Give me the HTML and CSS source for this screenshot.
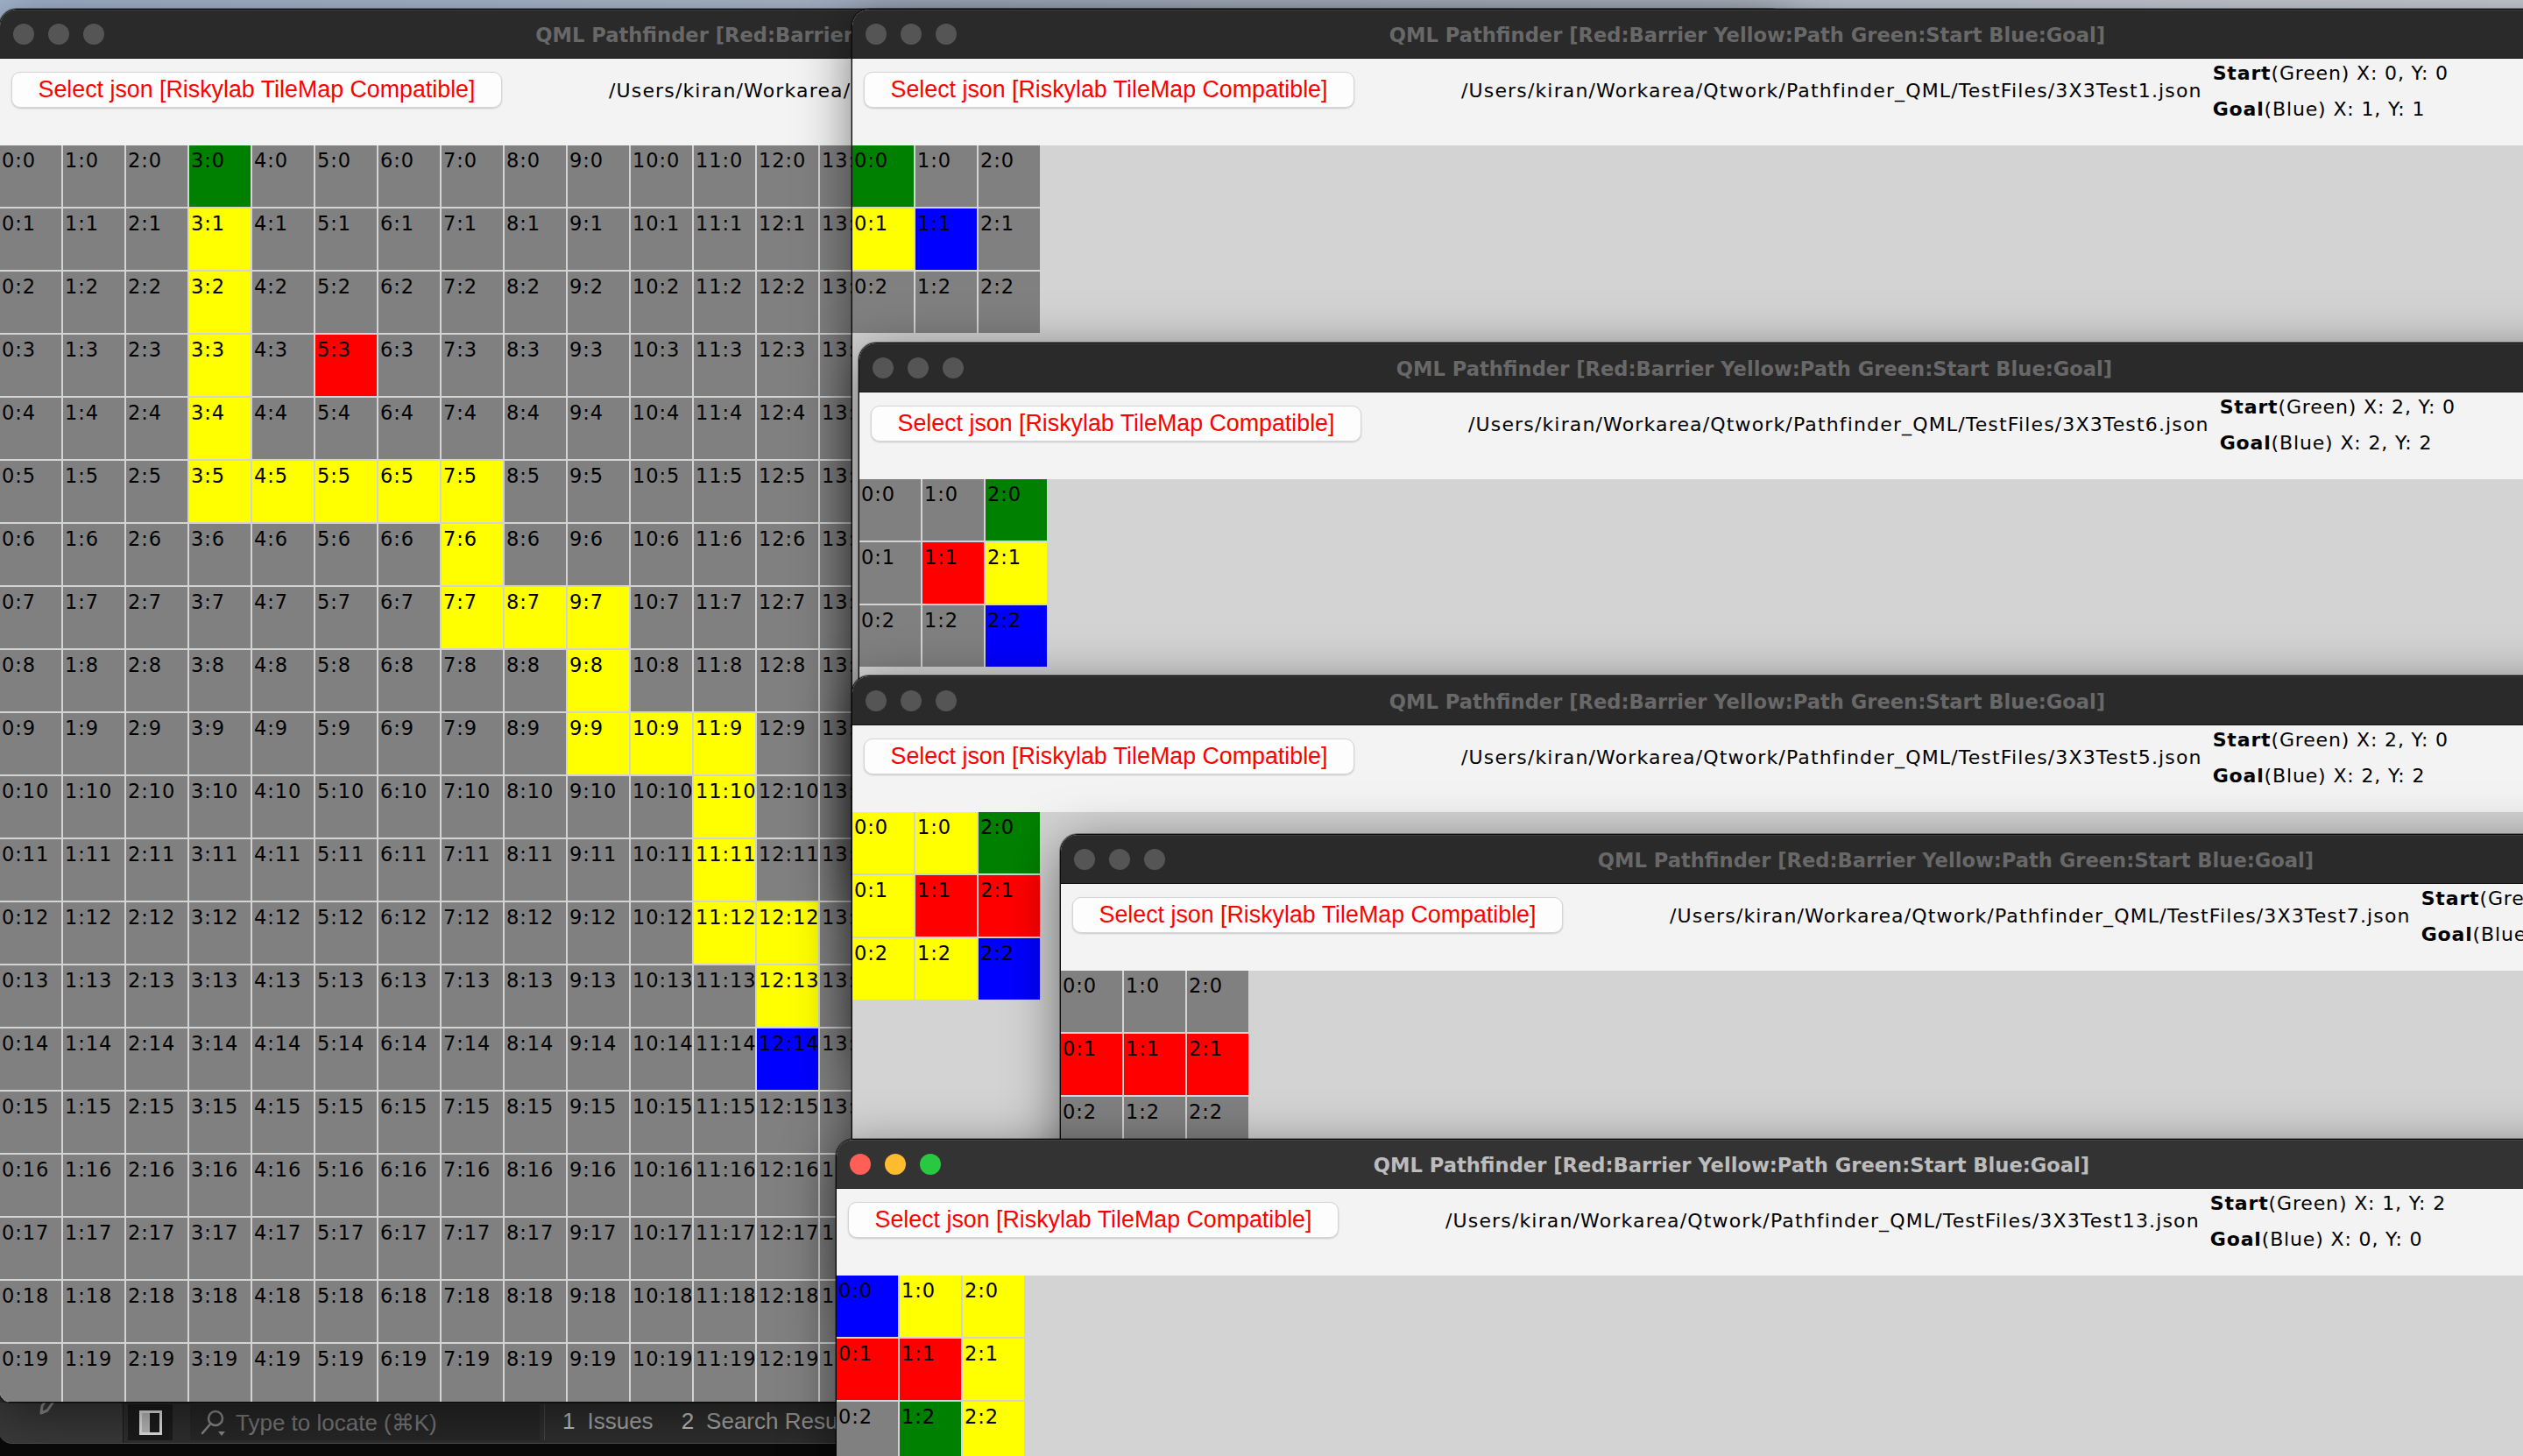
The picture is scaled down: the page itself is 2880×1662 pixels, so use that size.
FILE: index.html
```html
<!DOCTYPE html>
<html>
<head>
<meta charset="utf-8">
<title>QML Pathfinder</title>
<link rel="stylesheet" href="styles.css">
</head>
<body>
<div class="wallpaper"></div>

<div class="creator">
  <div class="statusbar">
    <div class="modecell">
      <svg class="pencil" width="30" height="40" viewBox="0 0 30 40"><path d="M22 2 L28 7 L10 33 L3 36 L4 28 Z" fill="none" stroke="#8d8d8d" stroke-width="3" stroke-linejoin="round"/></svg>
    </div>
    <div class="toggle">
      <svg width="26" height="28" viewBox="0 0 26 28"><rect x="1.5" y="1.5" width="23" height="25" fill="#1d1d1d" stroke="#e6e6e6" stroke-width="3"/><rect x="3" y="3" width="9" height="22" fill="#bdbdbd"/></svg>
    </div>
    <div class="search">
      <svg width="34" height="34" viewBox="0 0 34 34"><circle cx="19" cy="12" r="8" fill="none" stroke="#8a8a8a" stroke-width="2.5"/><path d="M13.5 18 L4 29" stroke="#8a8a8a" stroke-width="2.5" stroke-linecap="round"/><path d="M22 27 L30 27 L26 32 Z" fill="#8a8a8a"/></svg>
      <span>Type to locate (⌘K)</span>
    </div>
    <div class="sep"></div>
    <div class="pane"><span class="num">1</span>Issues</div>
    <div class="pane"><span class="num">2</span>Search Results</div>
  </div>
</div>

<!-- Window 1 : 20x20 map -->
<section class="win w1">
  <div class="titlebar">
    <div class="lights"><span class="light close"></span><span class="light min"></span><span class="light max"></span></div>
    <div class="title">QML Pathfinder [Red:Barrier Yellow:Path Green:Start Blue:Goal]</div>
    <div></div>
  </div>
  <div class="header">
    <button class="btn">Select json [Riskylab TileMap Compatible]</button>
    <div class="path">/Users/kiran/Workarea/Qtwork/Pathfinder_QML/TestFiles/20X20Test1.json</div>
    <div class="info"><div><b>Start</b>(Green) X: 3, Y: 0</div><div><b>Goal</b>(Blue) X: 12, Y: 14</div></div>
  </div>
  <div class="area">
    <div class="grid big">
      <div class="c">0:0</div><div class="c">1:0</div><div class="c">2:0</div><div class="c g">3:0</div><div class="c">4:0</div><div class="c">5:0</div><div class="c">6:0</div><div class="c">7:0</div><div class="c">8:0</div><div class="c">9:0</div><div class="c">10:0</div><div class="c">11:0</div><div class="c">12:0</div><div class="c">13:0</div>
      <div class="c">0:1</div><div class="c">1:1</div><div class="c">2:1</div><div class="c y">3:1</div><div class="c">4:1</div><div class="c">5:1</div><div class="c">6:1</div><div class="c">7:1</div><div class="c">8:1</div><div class="c">9:1</div><div class="c">10:1</div><div class="c">11:1</div><div class="c">12:1</div><div class="c">13:1</div>
      <div class="c">0:2</div><div class="c">1:2</div><div class="c">2:2</div><div class="c y">3:2</div><div class="c">4:2</div><div class="c">5:2</div><div class="c">6:2</div><div class="c">7:2</div><div class="c">8:2</div><div class="c">9:2</div><div class="c">10:2</div><div class="c">11:2</div><div class="c">12:2</div><div class="c">13:2</div>
      <div class="c">0:3</div><div class="c">1:3</div><div class="c">2:3</div><div class="c y">3:3</div><div class="c">4:3</div><div class="c r">5:3</div><div class="c">6:3</div><div class="c">7:3</div><div class="c">8:3</div><div class="c">9:3</div><div class="c">10:3</div><div class="c">11:3</div><div class="c">12:3</div><div class="c">13:3</div>
      <div class="c">0:4</div><div class="c">1:4</div><div class="c">2:4</div><div class="c y">3:4</div><div class="c">4:4</div><div class="c">5:4</div><div class="c">6:4</div><div class="c">7:4</div><div class="c">8:4</div><div class="c">9:4</div><div class="c">10:4</div><div class="c">11:4</div><div class="c">12:4</div><div class="c">13:4</div>
      <div class="c">0:5</div><div class="c">1:5</div><div class="c">2:5</div><div class="c y">3:5</div><div class="c y">4:5</div><div class="c y">5:5</div><div class="c y">6:5</div><div class="c y">7:5</div><div class="c">8:5</div><div class="c">9:5</div><div class="c">10:5</div><div class="c">11:5</div><div class="c">12:5</div><div class="c">13:5</div>
      <div class="c">0:6</div><div class="c">1:6</div><div class="c">2:6</div><div class="c">3:6</div><div class="c">4:6</div><div class="c">5:6</div><div class="c">6:6</div><div class="c y">7:6</div><div class="c">8:6</div><div class="c">9:6</div><div class="c">10:6</div><div class="c">11:6</div><div class="c">12:6</div><div class="c">13:6</div>
      <div class="c">0:7</div><div class="c">1:7</div><div class="c">2:7</div><div class="c">3:7</div><div class="c">4:7</div><div class="c">5:7</div><div class="c">6:7</div><div class="c y">7:7</div><div class="c y">8:7</div><div class="c y">9:7</div><div class="c">10:7</div><div class="c">11:7</div><div class="c">12:7</div><div class="c">13:7</div>
      <div class="c">0:8</div><div class="c">1:8</div><div class="c">2:8</div><div class="c">3:8</div><div class="c">4:8</div><div class="c">5:8</div><div class="c">6:8</div><div class="c">7:8</div><div class="c">8:8</div><div class="c y">9:8</div><div class="c">10:8</div><div class="c">11:8</div><div class="c">12:8</div><div class="c">13:8</div>
      <div class="c">0:9</div><div class="c">1:9</div><div class="c">2:9</div><div class="c">3:9</div><div class="c">4:9</div><div class="c">5:9</div><div class="c">6:9</div><div class="c">7:9</div><div class="c">8:9</div><div class="c y">9:9</div><div class="c y">10:9</div><div class="c y">11:9</div><div class="c">12:9</div><div class="c">13:9</div>
      <div class="c">0:10</div><div class="c">1:10</div><div class="c">2:10</div><div class="c">3:10</div><div class="c">4:10</div><div class="c">5:10</div><div class="c">6:10</div><div class="c">7:10</div><div class="c">8:10</div><div class="c">9:10</div><div class="c">10:10</div><div class="c y">11:10</div><div class="c">12:10</div><div class="c">13:10</div>
      <div class="c">0:11</div><div class="c">1:11</div><div class="c">2:11</div><div class="c">3:11</div><div class="c">4:11</div><div class="c">5:11</div><div class="c">6:11</div><div class="c">7:11</div><div class="c">8:11</div><div class="c">9:11</div><div class="c">10:11</div><div class="c y">11:11</div><div class="c">12:11</div><div class="c">13:11</div>
      <div class="c">0:12</div><div class="c">1:12</div><div class="c">2:12</div><div class="c">3:12</div><div class="c">4:12</div><div class="c">5:12</div><div class="c">6:12</div><div class="c">7:12</div><div class="c">8:12</div><div class="c">9:12</div><div class="c">10:12</div><div class="c y">11:12</div><div class="c y">12:12</div><div class="c">13:12</div>
      <div class="c">0:13</div><div class="c">1:13</div><div class="c">2:13</div><div class="c">3:13</div><div class="c">4:13</div><div class="c">5:13</div><div class="c">6:13</div><div class="c">7:13</div><div class="c">8:13</div><div class="c">9:13</div><div class="c">10:13</div><div class="c">11:13</div><div class="c y">12:13</div><div class="c">13:13</div>
      <div class="c">0:14</div><div class="c">1:14</div><div class="c">2:14</div><div class="c">3:14</div><div class="c">4:14</div><div class="c">5:14</div><div class="c">6:14</div><div class="c">7:14</div><div class="c">8:14</div><div class="c">9:14</div><div class="c">10:14</div><div class="c">11:14</div><div class="c b">12:14</div><div class="c">13:14</div>
      <div class="c">0:15</div><div class="c">1:15</div><div class="c">2:15</div><div class="c">3:15</div><div class="c">4:15</div><div class="c">5:15</div><div class="c">6:15</div><div class="c">7:15</div><div class="c">8:15</div><div class="c">9:15</div><div class="c">10:15</div><div class="c">11:15</div><div class="c">12:15</div><div class="c">13:15</div>
      <div class="c">0:16</div><div class="c">1:16</div><div class="c">2:16</div><div class="c">3:16</div><div class="c">4:16</div><div class="c">5:16</div><div class="c">6:16</div><div class="c">7:16</div><div class="c">8:16</div><div class="c">9:16</div><div class="c">10:16</div><div class="c">11:16</div><div class="c">12:16</div><div class="c">13:16</div>
      <div class="c">0:17</div><div class="c">1:17</div><div class="c">2:17</div><div class="c">3:17</div><div class="c">4:17</div><div class="c">5:17</div><div class="c">6:17</div><div class="c">7:17</div><div class="c">8:17</div><div class="c">9:17</div><div class="c">10:17</div><div class="c">11:17</div><div class="c">12:17</div><div class="c">13:17</div>
      <div class="c">0:18</div><div class="c">1:18</div><div class="c">2:18</div><div class="c">3:18</div><div class="c">4:18</div><div class="c">5:18</div><div class="c">6:18</div><div class="c">7:18</div><div class="c">8:18</div><div class="c">9:18</div><div class="c">10:18</div><div class="c">11:18</div><div class="c">12:18</div><div class="c">13:18</div>
      <div class="c">0:19</div><div class="c">1:19</div><div class="c">2:19</div><div class="c">3:19</div><div class="c">4:19</div><div class="c">5:19</div><div class="c">6:19</div><div class="c">7:19</div><div class="c">8:19</div><div class="c">9:19</div><div class="c">10:19</div><div class="c">11:19</div><div class="c">12:19</div><div class="c">13:19</div>
    </div>
  </div>
</section>

<!-- Window 2 -->
<section class="win w2">
  <div class="titlebar">
    <div class="lights"><span class="light close"></span><span class="light min"></span><span class="light max"></span></div>
    <div class="title">QML Pathfinder [Red:Barrier Yellow:Path Green:Start Blue:Goal]</div>
    <div></div>
  </div>
  <div class="header">
    <button class="btn">Select json [Riskylab TileMap Compatible]</button>
    <div class="path">/Users/kiran/Workarea/Qtwork/Pathfinder_QML/TestFiles/3X3Test1.json</div>
    <div class="info"><div><b>Start</b>(Green) X: 0, Y: 0</div><div><b>Goal</b>(Blue) X: 1, Y: 1</div></div>
  </div>
  <div class="area">
    <div class="grid">
      <div class="c g">0:0</div><div class="c">1:0</div><div class="c">2:0</div>
      <div class="c y">0:1</div><div class="c b">1:1</div><div class="c">2:1</div>
      <div class="c">0:2</div><div class="c">1:2</div><div class="c">2:2</div>
    </div>
  </div>
</section>

<!-- Window 3 -->
<section class="win w3">
  <div class="titlebar">
    <div class="lights"><span class="light close"></span><span class="light min"></span><span class="light max"></span></div>
    <div class="title">QML Pathfinder [Red:Barrier Yellow:Path Green:Start Blue:Goal]</div>
    <div></div>
  </div>
  <div class="header">
    <button class="btn">Select json [Riskylab TileMap Compatible]</button>
    <div class="path">/Users/kiran/Workarea/Qtwork/Pathfinder_QML/TestFiles/3X3Test6.json</div>
    <div class="info"><div><b>Start</b>(Green) X: 2, Y: 0</div><div><b>Goal</b>(Blue) X: 2, Y: 2</div></div>
  </div>
  <div class="area">
    <div class="grid">
      <div class="c">0:0</div><div class="c">1:0</div><div class="c g">2:0</div>
      <div class="c">0:1</div><div class="c r">1:1</div><div class="c y">2:1</div>
      <div class="c">0:2</div><div class="c">1:2</div><div class="c b">2:2</div>
    </div>
  </div>
</section>

<!-- Window 4 -->
<section class="win w4">
  <div class="titlebar">
    <div class="lights"><span class="light close"></span><span class="light min"></span><span class="light max"></span></div>
    <div class="title">QML Pathfinder [Red:Barrier Yellow:Path Green:Start Blue:Goal]</div>
    <div></div>
  </div>
  <div class="header">
    <button class="btn">Select json [Riskylab TileMap Compatible]</button>
    <div class="path">/Users/kiran/Workarea/Qtwork/Pathfinder_QML/TestFiles/3X3Test5.json</div>
    <div class="info"><div><b>Start</b>(Green) X: 2, Y: 0</div><div><b>Goal</b>(Blue) X: 2, Y: 2</div></div>
  </div>
  <div class="area">
    <div class="grid">
      <div class="c y">0:0</div><div class="c y">1:0</div><div class="c g">2:0</div>
      <div class="c y">0:1</div><div class="c r">1:1</div><div class="c r">2:1</div>
      <div class="c y">0:2</div><div class="c y">1:2</div><div class="c b">2:2</div>
    </div>
  </div>
</section>

<!-- Window 5 -->
<section class="win w5">
  <div class="titlebar">
    <div class="lights"><span class="light close"></span><span class="light min"></span><span class="light max"></span></div>
    <div class="title">QML Pathfinder [Red:Barrier Yellow:Path Green:Start Blue:Goal]</div>
    <div></div>
  </div>
  <div class="header">
    <button class="btn">Select json [Riskylab TileMap Compatible]</button>
    <div class="path">/Users/kiran/Workarea/Qtwork/Pathfinder_QML/TestFiles/3X3Test7.json</div>
    <div class="info"><div><b>Start</b>(Green) X: 0, Y: 0</div><div><b>Goal</b>(Blue) X: 2, Y: 2</div></div>
  </div>
  <div class="area">
    <div class="grid">
      <div class="c">0:0</div><div class="c">1:0</div><div class="c">2:0</div>
      <div class="c r">0:1</div><div class="c r">1:1</div><div class="c r">2:1</div>
      <div class="c">0:2</div><div class="c">1:2</div><div class="c">2:2</div>
    </div>
  </div>
</section>

<!-- Window 6 (active) -->
<section class="win w6 active">
  <div class="titlebar">
    <div class="lights"><span class="light close"></span><span class="light min"></span><span class="light max"></span></div>
    <div class="title">QML Pathfinder [Red:Barrier Yellow:Path Green:Start Blue:Goal]</div>
    <div></div>
  </div>
  <div class="header">
    <button class="btn">Select json [Riskylab TileMap Compatible]</button>
    <div class="path">/Users/kiran/Workarea/Qtwork/Pathfinder_QML/TestFiles/3X3Test13.json</div>
    <div class="info"><div><b>Start</b>(Green) X: 1, Y: 2</div><div><b>Goal</b>(Blue) X: 0, Y: 0</div></div>
  </div>
  <div class="area">
    <div class="grid">
      <div class="c b">0:0</div><div class="c y">1:0</div><div class="c y">2:0</div>
      <div class="c r">0:1</div><div class="c r">1:1</div><div class="c y">2:1</div>
      <div class="c">0:2</div><div class="c g">1:2</div><div class="c y">2:2</div>
    </div>
  </div>
</section>
</body>
</html>
```

FILE: styles.css
```css
* { box-sizing: border-box; }
html, body { margin: 0; padding: 0; }
body {
  width: 2880px;
  height: 1662px;
  overflow: hidden;
  position: relative;
  background: #0a0a0a;
  font-family: "DejaVu Sans", sans-serif;
}

.wallpaper {
  position: absolute;
  left: 0; top: 0;
  width: 2880px; height: 80px;
  background: linear-gradient(90deg, #a3b5ce 0%, #b6c2d4 45%, #cdd1d9 100%);
}

/* Qt Creator window behind, only its status bar is visible */
.creator {
  position: absolute;
  left: -2px; top: 1420px;
  width: 1200px; height: 228px;
  background: #2f2f2f;
  border-radius: 0 0 16px 16px;
  border-bottom: 1px solid #505050;
  display: flex;
  flex-direction: column;
  justify-content: flex-end;
  overflow: hidden;
}
.statusbar {
  height: 46px;
  display: flex;
  align-items: stretch;
  font: 26px/42px "Liberation Sans", Arial, sans-serif;
  color: #a6a6a6;
  white-space: nowrap;
}
.modecell {
  width: 143px;
  background: #3a3a3a;
  border-right: 1px solid #1a1a1a;
  position: relative;
}
.pencil { position: absolute; left: 46px; top: -24px; }
.toggle {
  margin: 2px 0 3px 5px;
  width: 51px;
  background: #1c1c1c;
  display: flex; align-items: center; justify-content: center;
}
.search {
  margin: 2px 0 3px 20px;
  width: 399px;
  background: #282828;
  display: flex; align-items: center; gap: 8px;
  padding-left: 10px;
  color: #7b7b7b;
}
.sep { width: 1px; background: #484848; margin: 2px 0 3px 5px; }
.pane { margin-left: 20px; color: #a9a9a9; }
.pane + .pane { margin-left: 32px; }
.num { color: #c4c4c4; margin-right: 14px; }

/* Windows */
.win {
  position: absolute;
  display: flex;
  flex-direction: column;
  border: 1px solid #0b0b0b;
  border-radius: 20px 20px 12px 12px;
  overflow: hidden;
  background: #d3d3d3;
  box-shadow: 0 0 0 1px rgba(0,0,0,0.35), 0 14px 60px rgba(0,0,0,0.5);
}
.w1 { left: -1px; top: 10px; width: 2042px; height: 1591px; }
.w2 { left: 972px; top: 10px; width: 2045px; height: 1000px; }
.w3 { left: 980px; top: 391px; width: 2045px; height: 800px; }
.w4 { left: 972px; top: 771px; width: 2045px; height: 700px; }
.w5 { left: 1210px; top: 952px; width: 2045px; height: 600px; }
.w6 { left: 954px; top: 1300px; width: 2045px; height: 500px; }

.titlebar {
  flex: none;
  height: 56px;
  display: grid;
  grid-template-columns: 1fr auto 1fr;
  align-items: center;
  background: #2a2a2a;
  border-bottom: 1px solid #121212;
  box-shadow: inset 0 1px 0 rgba(255,255,255,0.09);
}
.active .titlebar { background: #333333; }
.lights { display: flex; gap: 16px; padding-left: 15px; }
.light { width: 24px; height: 24px; border-radius: 50%; background: #555555; }
.active .light.close { background: #ff5f57; }
.active .light.min { background: #febc2e; }
.active .light.max { background: #28c840; }
.title {
  font: bold 22.6px/1 "DejaVu Sans", sans-serif;
  color: #686868;
  white-space: nowrap;
  padding-top: 3px;
}
.active .title { color: #bcbcbc; }

.header {
  flex: none;
  height: 99px;
  background: #f3f3f3;
  display: flex;
  align-items: flex-start;
  white-space: nowrap;
}
.btn {
  flex: none;
  margin: 15px 0 0 13px;
  width: 560px;
  height: 41px;
  padding: 0;
  border: 1px solid #d5d5d5;
  border-radius: 10px;
  background: #fdfdfd;
  box-shadow: 0 1px 2px rgba(0,0,0,0.18);
  color: #ff0000;
  font: 26.8px/1 "Liberation Sans", Arial, sans-serif;
}
.path {
  margin: 20px 0 0 122px;
  font: 22px/33px "DejaVu Sans", sans-serif;
  letter-spacing: 1.15px;
  color: #000;
}
.info {
  margin-left: 12px;
  font: 22px/33px "DejaVu Sans", sans-serif;
  letter-spacing: 0.85px;
  color: #000;
}
.info div + div { margin-top: 8px; }
.info b { font-weight: bold; }

.area {
  flex: 1;
  min-height: 0;
  background: #d3d3d3;
}
.grid {
  display: grid;
  grid-template-columns: repeat(3, 70px);
  grid-auto-rows: 70px;
  gap: 2px;
  width: max-content;
}
.grid.big { grid-template-columns: repeat(14, 70px); }
.c {
  background: #808080;
  color: #000;
  font: 22.5px/26px "DejaVu Sans", sans-serif;
  letter-spacing: 0.9px;
  padding: 4px 0 0 2px;
  white-space: nowrap;
  overflow: hidden;
}
.c.g { background: #008000; }
.c.y { background: #ffff00; }
.c.r { background: #ff0000; }
.c.b { background: #0000ff; }
```
